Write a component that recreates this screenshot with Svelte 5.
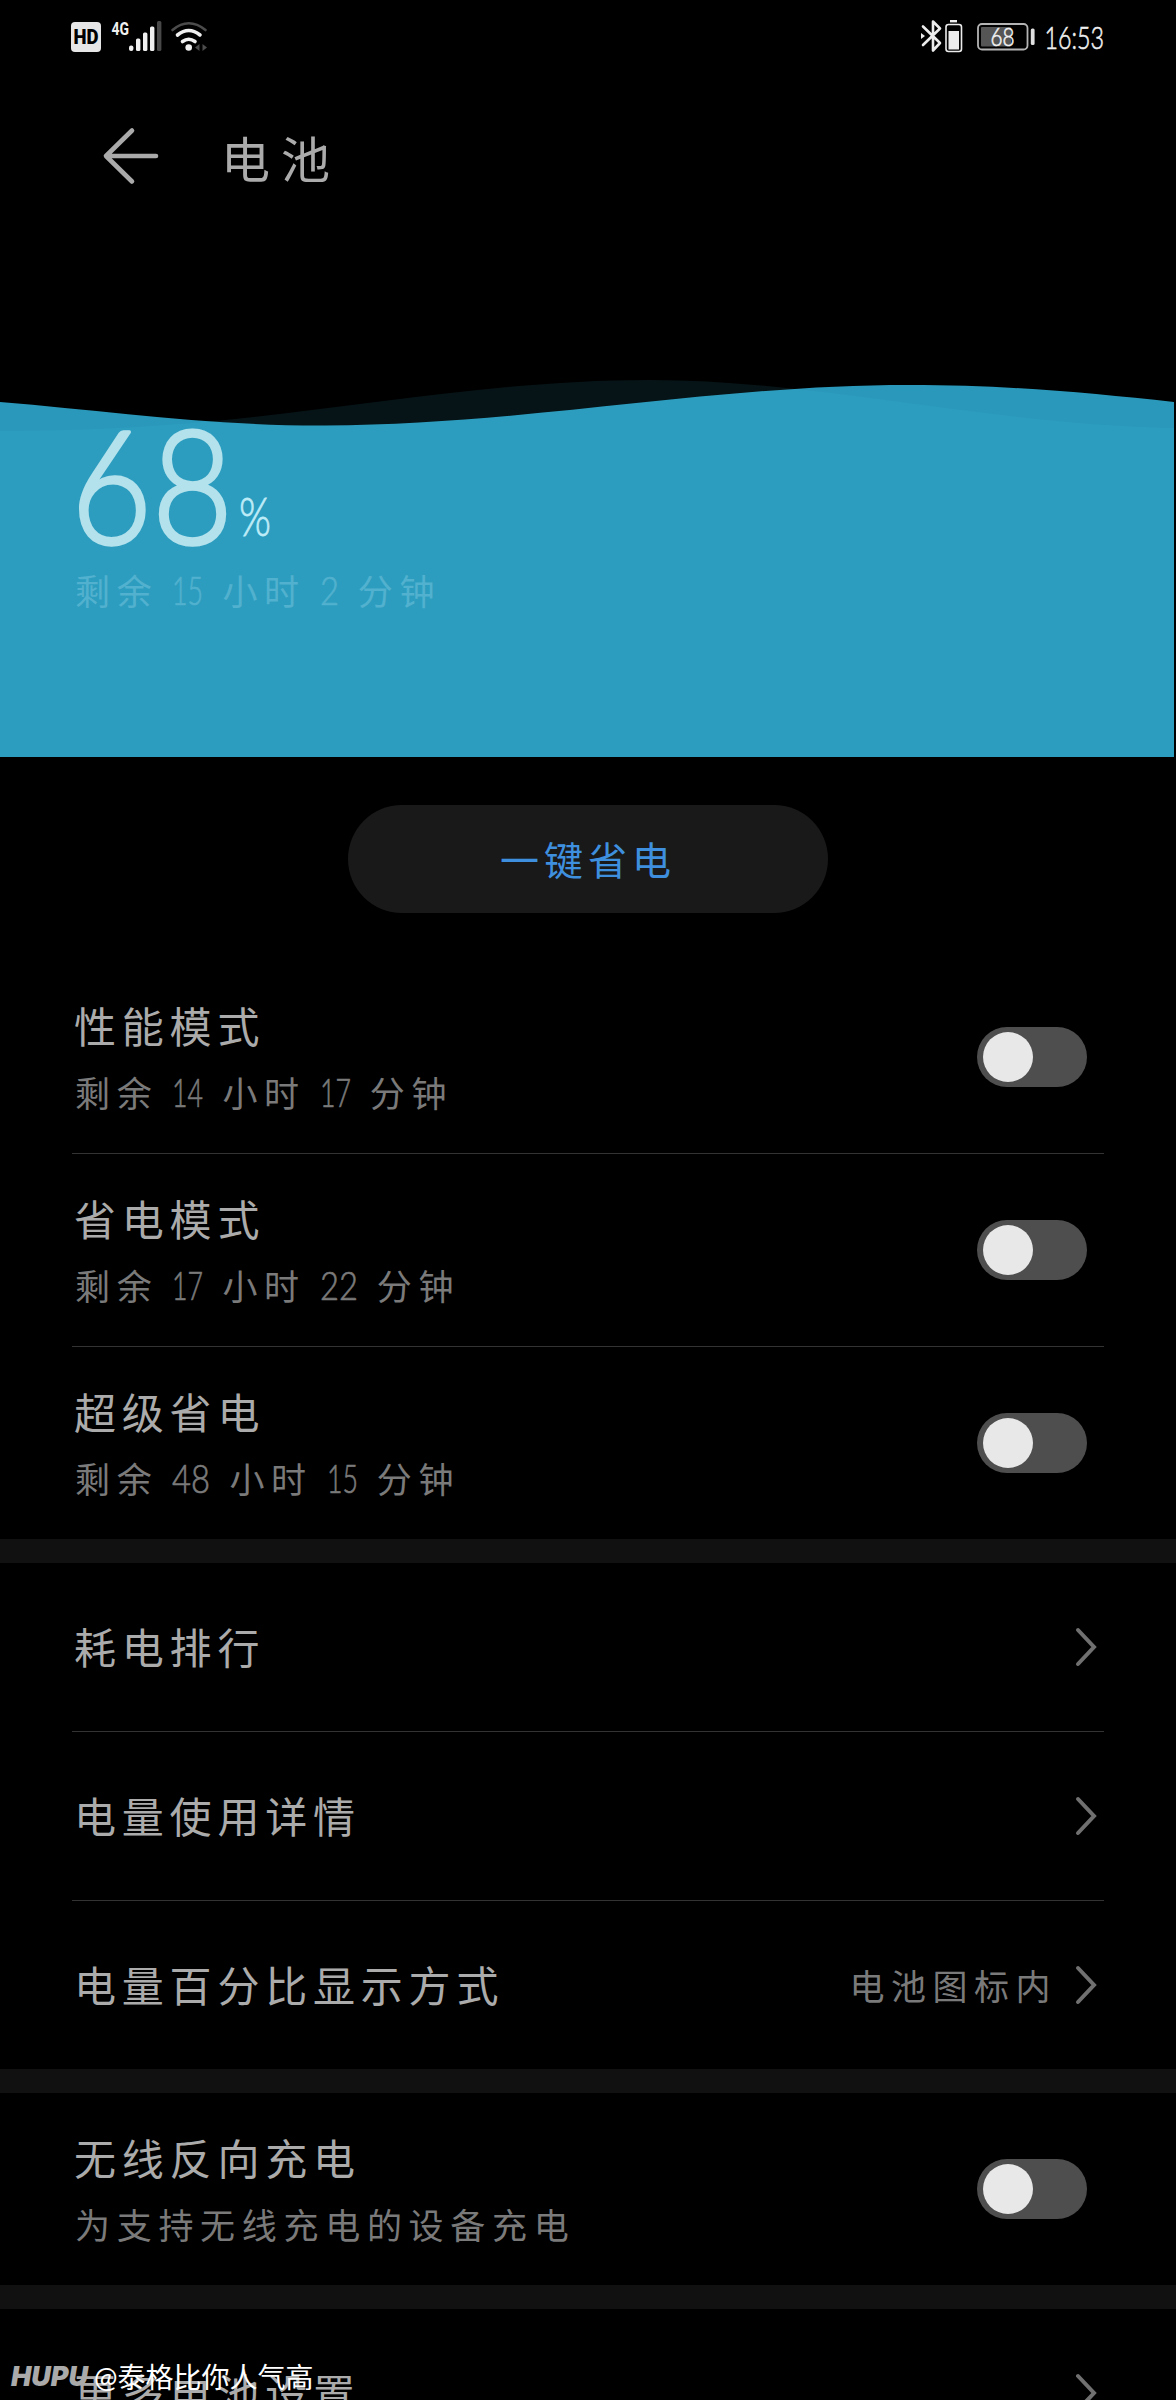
<script>
  let level = 68;
  let time = '16:53';

  let modes = [
    { title: '性能模式', desc: '剩余 14 小时 17 分钟', on: false },
    { title: '省电模式', desc: '剩余 17 小时 22 分钟', on: false },
    { title: '超级省电', desc: '剩余 48 小时 15 分钟', on: false }
  ];

  let links = [
    { title: '耗电排行', value: '' },
    { title: '电量使用详情', value: '' },
    { title: '电量百分比显示方式', value: '电池图标内' }
  ];

  let reverse = [
    { title: '无线反向充电', desc: '为支持无线充电的设备充电', on: false }
  ];

  let more = [{ title: '更多电池设置', value: '' }];

  // numbers are set narrower than the Chinese text around them
  const split = (text) => text.split(' ').map((t) => ({ t, num: /^\d+$/.test(t) }));
  const numWidth = (t) => [...t].reduce((w, c) => w + (c === '1' ? 12 : 19), 0);
</script>

{#snippet duration(text)}
  {#each split(text) as part}
    {#if part.num}
      <svg class="num" width={numWidth(part.t)} height="32">
        <text x="0" y="30" textLength={numWidth(part.t)} lengthAdjust="spacingAndGlyphs">{part.t}</text>
      </svg>
    {:else}
      <span>{part.t}</span>
    {/if}
  {/each}
{/snippet}

{#snippet toggleRow(item)}
  <div class="row tall">
    <div class="labels">
      <div class="title">{item.title}</div>
      <div class="desc">{@render duration(item.desc)}</div>
    </div>
    <button class="toggle" class:on={item.on} aria-label={item.title} on:click={() => (item.on = !item.on)}>
      <span class="knob"></span>
    </button>
  </div>
{/snippet}

{#snippet linkRow(item)}
  <div class="row">
    <div class="title">{item.title}</div>
    <div class="end">
      {#if item.value}<span class="value">{item.value}</span>{/if}
      <svg width="24" height="42" viewBox="0 0 24 42" fill="none" stroke="#707070" stroke-width="4" stroke-linecap="round">
        <path d="M4 4 L20 21 L4 38" />
      </svg>
    </div>
  </div>
{/snippet}

<div class="screen">
  <div class="status">
    <svg width="140" height="36" viewBox="70 18 140 36">
      <rect x="71" y="22" width="30" height="30" rx="4" fill="#e6e6e6" />
      <text x="73.5" y="44" class="hd" textLength="25" lengthAdjust="spacingAndGlyphs">HD</text>
      <text x="111.5" y="35" class="net" textLength="17.5" lengthAdjust="spacingAndGlyphs">4G</text>
      <g fill="#f0f0f0">
        <rect x="129" y="45.5" width="4.4" height="5.5" rx="2" />
        <rect x="136" y="38.5" width="4.4" height="12.5" rx="1.5" />
        <rect x="143" y="32.5" width="4.4" height="18.5" rx="1.5" />
        <rect x="150" y="26.5" width="4.4" height="24.5" rx="1.5" />
        <rect x="157" y="21" width="4.4" height="30" rx="1.5" fill="#484848" />
        <circle cx="188.7" cy="47.5" r="3.3" />
      </g>
      <g fill="none" stroke-width="3.6" stroke-linecap="round" stroke="#f0f0f0">
        <path d="M172.5 30 Q188.7 16.5 205.5 30" stroke="#4c4c4c" stroke-width="2.6" />
        <path d="M177.5 35 Q188.7 26 200 35" />
        <path d="M182.5 41.5 Q188.7 37 195 41.5" />
      </g>
      <path d="M199.5 44 V51 L195 47.5 Z M202.5 44 V51 L207 47.5 Z" fill="#4c4c4c" />
    </svg>
    <svg width="184" height="36" viewBox="920 18 184 36">
      <path d="M923 26.5 L940 43 L933 50.5 V21.5 L940 28.5 L923 45" fill="none" stroke="#ececec" stroke-width="2.6" stroke-linejoin="round" stroke-linecap="round" />
      <path d="M921 33 L925 36 L921 39 Z" fill="#ececec" />
      <rect x="950" y="20" width="7" height="2.4" fill="#ececec" />
      <rect x="946" y="24.5" width="15.5" height="27" rx="2.5" fill="none" stroke="#ececec" stroke-width="1.6" />
      <rect x="948.5" y="31" width="10.5" height="18.5" fill="#ececec" />
      <rect x="978" y="24" width="49.5" height="25.5" rx="4" fill="none" stroke="#b4b4b4" stroke-width="1.8" />
      <rect x="981" y="27" width="30" height="19.5" rx="1" fill="#555" />
      <rect x="1030.8" y="28.5" width="3.8" height="16.5" rx="1.5" fill="#e0e0e0" />
      <text x="990.5" y="45.5" class="thin" font-size="25" textLength="24" lengthAdjust="spacingAndGlyphs">{level}</text>
      <text x="1044.5" y="48.5" class="thin" font-size="31" textLength="59.5" lengthAdjust="spacingAndGlyphs">{time}</text>
    </svg>
  </div>

  <header>
    <svg width="58" height="60" viewBox="0 0 58 60" fill="none" stroke="#aaa" stroke-width="4.6" stroke-linecap="round" stroke-linejoin="round">
      <path d="M31 4.5 L5 30 L31 55.5 M5 30 H55" />
    </svg>
    <h1>电池</h1>
  </header>

  <section class="hero">
    <svg class="waves" width="1174" height="381" viewBox="0 376 1174 381">
      <path fill="#2a98ba" d="M0 402 C110 411 210 426 325 425.5 C530 424.5 710 385 909 385 C1010 385 1090 393 1174 402 V757 H0 Z" />
      <path fill="#4cd2f0" fill-opacity="0.095" d="M0 431 C80 431 150 427 215 421 C360 407 500 380 650 380 C820 380 990 425 1174 428 V757 H0 Z" />
    </svg>
    <div class="reading">
      <svg width="220" height="130" viewBox="72 422 220 130">
        <text x="71" y="544" class="level" textLength="162" lengthAdjust="spacingAndGlyphs">{level}</text>
        <text x="239" y="536" class="percent" textLength="32" lengthAdjust="spacingAndGlyphs">%</text>
      </svg>
      <div class="desc remain">{@render duration('剩余 15 小时 2 分钟')}</div>
    </div>
  </section>

  <div class="action">
    <button class="save">一键省电</button>
  </div>

  <section class="group">
    {#each modes as item}{@render toggleRow(item)}{/each}
  </section>
  <section class="group">
    {#each links as item}{@render linkRow(item)}{/each}
  </section>
  <section class="group">
    {#each reverse as item}{@render toggleRow(item)}{/each}
  </section>
  <section class="group">
    {#each more as item}{@render linkRow(item)}{/each}
  </section>

  <div class="watermark">
    <span class="brand">HUPU</span>
    <span>@泰格比你人气高</span>
  </div>
</div>

<style>
  :global(body) {
    background: #000;
  }

  .screen {
    position: relative;
    width: 1176px;
    height: 2400px;
    overflow: hidden;
    background: #000;
    color: #ababab;
    font-family: Lato, "Noto Sans CJK SC", sans-serif;
    font-weight: 400;
  }

  svg {
    display: block;
    flex: none;
    overflow: visible;
  }

  .status {
    display: flex;
    justify-content: space-between;
    padding: 18px 72px 0 70px;
    height: 54px;
  }

  .hd {
    font: 900 20px Roboto, sans-serif;
    fill: #000;
  }

  .net {
    font: 700 19px Roboto, sans-serif;
    fill: #f0f0f0;
  }

  .thin {
    font-family: Lato, sans-serif;
    font-weight: 300;
    fill: #f0f0f0;
    stroke: #f0f0f0;
    stroke-width: 0.6px;
  }

  header {
    display: flex;
    align-items: center;
    gap: 62px;
    height: 168px;
    padding-left: 101px;
  }

  h1 {
    margin: 5px 0 0;
    font-size: 49px;
    font-weight: 400;
    letter-spacing: 11px;
    line-height: 60px;
  }

  .hero {
    display: grid;
    height: 381px;
    margin-top: 136px;
  }

  .waves,
  .reading {
    grid-area: 1 / 1;
  }

  .reading {
    padding: 46px 0 0 72px;
  }

  .level {
    font: 300 158px Lato, sans-serif;
    fill: #b4e2ec;
    stroke: #b4e2ec;
    stroke-width: 3.5px;
    stroke-linejoin: round;
  }

  .percent {
    font: 300 53px Lato, sans-serif;
    fill: #bdebf7;
    stroke: #bdebf7;
    stroke-width: 0.8px;
  }

  .action {
    display: flex;
    justify-content: center;
    padding: 48px 0;
  }

  .save {
    width: 480px;
    height: 108px;
    padding: 0 0 2px;
    border: none;
    border-radius: 54px;
    background: #191919;
    color: #3f8fdf;
    font-family: inherit;
    font-size: 39px;
    letter-spacing: 5px;
  }

  .group + .group {
    border-top: 24px solid #111;
  }

  .row {
    display: flex;
    align-items: center;
    justify-content: space-between;
    height: 168px;
    margin: 0 72px;
    border-bottom: 1px solid #333;
  }

  .row.tall {
    height: 192px;
  }

  .row:last-child {
    border-bottom: none;
  }

  .title {
    margin-top: 2px;
    padding-left: 2px;
    font-size: 42px;
    letter-spacing: 5.8px;
    line-height: 66px;
  }

  .labels .title {
    margin-top: 5px;
  }

  .desc {
    display: flex;
    align-items: center;
    gap: 14px;
    padding-left: 3px;
    font-size: 35px;
    letter-spacing: 6.7px;
    line-height: 66px;
    color: #7a7a7a;
  }

  .num {
    margin-right: 5px;
    font-size: 39px;
    font-weight: 300;
    letter-spacing: 0;
    fill: currentColor;
    stroke: currentColor;
    stroke-width: 0.7px;
  }

  .remain {
    margin-top: 6px;
    color: #52b1ce;
  }

  .toggle {
    width: 110px;
    height: 60px;
    margin-right: 17px;
    padding: 5px 6px;
    border: none;
    border-radius: 30px;
    background: #4e4e4e;
  }

  .toggle.on {
    background: #3f92e6;
  }

  .knob {
    display: block;
    width: 50px;
    height: 50px;
    border-radius: 50%;
    background: #e8e8e8;
  }

  .toggle.on .knob {
    margin-left: auto;
  }

  .end {
    display: flex;
    align-items: center;
    gap: 17px;
    padding-right: 6px;
  }

  .value {
    margin-top: -2px;
    font-size: 35px;
    letter-spacing: 6.5px;
    color: #7a7a7a;
  }

  .watermark {
    position: absolute;
    left: 11px;
    top: 2355px;
    display: flex;
    align-items: center;
    gap: 4px;
    height: 42px;
    color: #fff;
    font-size: 28px;
    white-space: nowrap;
  }

  .brand {
    width: 79px;
    color: #aaa;
    font-family: Inter, sans-serif;
    font-size: 27px;
    font-style: italic;
    font-weight: 900;
  }
</style>
